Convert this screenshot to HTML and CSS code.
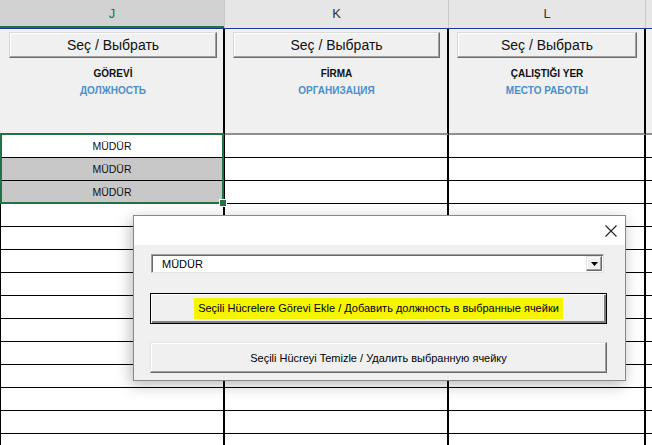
FILE: index.html
```html
<!DOCTYPE html>
<html>
<head>
<meta charset="utf-8">
<link rel="stylesheet" href="styles.css">
</head>
<body>
<div class="sheet">
  <div class="colheads">
    <div class="ch sel">J</div>
    <div class="ch">K</div>
    <div class="ch">L</div>
    <div class="ch last"></div>
  </div>
  <div class="row head">
    <div class="cell first">
      <button class="pick">Seç / Выбрать</button>
      <div class="tr">GÖREVİ</div>
      <div class="ru">ДОЛЖНОСТЬ</div>
    </div>
    <div class="cell">
      <button class="pick">Seç / Выбрать</button>
      <div class="tr">FİRMA</div>
      <div class="ru">ОРГАНИЗАЦИЯ</div>
    </div>
    <div class="cell">
      <button class="pick">Seç / Выбрать</button>
      <div class="tr">ÇALIŞTIĞI YER</div>
      <div class="ru">МЕСТО РАБОТЫ</div>
    </div>
    <div class="cell last"></div>
  </div>
  <div class="body">
    <div class="row"><div class="cell first">MÜDÜR</div><div class="cell"></div><div class="cell"></div><div class="cell last"></div></div>
    <div class="row"><div class="cell first gray">MÜDÜR</div><div class="cell"></div><div class="cell"></div><div class="cell last"></div></div>
    <div class="row"><div class="cell first gray">MÜDÜR</div><div class="cell"></div><div class="cell"></div><div class="cell last"></div></div>
    <div class="row"><div class="cell first"></div><div class="cell"></div><div class="cell"></div><div class="cell last"></div></div>
    <div class="row"><div class="cell first"></div><div class="cell"></div><div class="cell"></div><div class="cell last"></div></div>
    <div class="row"><div class="cell first"></div><div class="cell"></div><div class="cell"></div><div class="cell last"></div></div>
    <div class="row"><div class="cell first"></div><div class="cell"></div><div class="cell"></div><div class="cell last"></div></div>
    <div class="row"><div class="cell first"></div><div class="cell"></div><div class="cell"></div><div class="cell last"></div></div>
    <div class="row"><div class="cell first"></div><div class="cell"></div><div class="cell"></div><div class="cell last"></div></div>
    <div class="row"><div class="cell first"></div><div class="cell"></div><div class="cell"></div><div class="cell last"></div></div>
    <div class="row"><div class="cell first"></div><div class="cell"></div><div class="cell"></div><div class="cell last"></div></div>
    <div class="row"><div class="cell first"></div><div class="cell"></div><div class="cell"></div><div class="cell last"></div></div>
    <div class="row"><div class="cell first"></div><div class="cell"></div><div class="cell"></div><div class="cell last"></div></div>
    <div class="row"><div class="cell first"></div><div class="cell"></div><div class="cell"></div><div class="cell last"></div></div>
    <div class="selection"><span class="handle"></span></div>
  </div>

  <div class="dialog">
    <div class="titlebar">
      <svg class="close" width="12" height="12" viewBox="0 0 12 12"><path d="M0.5 0.5 L11.5 11.5 M11.5 0.5 L0.5 11.5" stroke="#222" stroke-width="1.1" fill="none"/></svg>
    </div>
    <div class="dbody">
      <div class="combo">
        <span class="combotext">MÜDÜR</span>
        <span class="drop"><svg width="7" height="4" viewBox="0 0 7 4"><path d="M0 0 H7 L3.5 4 Z" fill="#000"/></svg></span>
      </div>
      <button class="dbtn default"><span class="hl">Seçili Hücrelere Görevi Ekle / Добавить должность в выбранные ячейки</span></button>
      <button class="dbtn">Seçili Hücreyi Temizle / Удалить выбранную ячейку</button>
    </div>
  </div>
</div>
</body>
</html>
```

FILE: styles.css
```css
html, body {
  margin: 0;
  padding: 0;
  background: #fff;
  overflow: hidden;
}
.sheet {
  position: relative;
  width: 652px;
  height: 445px;
  overflow: hidden;
  font-family: "Liberation Sans", Arial, sans-serif;
}
.colheads {
  display: grid;
  grid-template-columns: 225px 224px 197px 1fr;
  height: 29px;
  box-sizing: border-box;
  border-bottom: 1px solid #1f3a8c;
  background: #e6e6e6;
}
.ch {
  box-sizing: border-box;
  border-right: 1px solid #c8c8c8;
  display: flex;
  align-items: center;
  justify-content: center;
  font-size: 13px;
  color: #333;
  padding-bottom: 1px;
}
.ch.sel {
  background: #d2d2d2;
  color: #217346;
  box-shadow: inset 0 -2px 0 #217346;
}
.ch.last { border-right: none; }

.row {
  display: grid;
  grid-template-columns: 225px 224px 197px 1fr;
  height: 23px;
}
.cell {
  box-sizing: border-box;
  border-right: 2px solid #000;
  border-bottom: 1px solid #000;
  display: flex;
  align-items: center;
  justify-content: center;
  font-size: 10.5px;
  color: #111;
}
.cell.first { border-left: 1px solid #000; }
.cell.last { border-right: none; }
.cell.gray { background: #c8c8c8; }

.row.head {
  height: 106px;
}
.row.head .cell {
  background: #f0f0f0;
  border-bottom: 2px solid #8f8f8f;
  flex-direction: column;
  justify-content: flex-start;
  padding: 3px 7px 0 8px;
}
.row.head .cell.first { border-left: none; padding-left: 9px; padding-right: 6px; }
.row.head .cell.last { padding: 0; }

.pick {
  width: 100%;
  height: 26px;
  margin: 0;
  padding: 0 0 1px;
  box-sizing: border-box;
  background: #f0f0f0;
  border: 1px solid;
  border-color: #d9d9d9 #6e6e6e #6e6e6e #d9d9d9;
  box-shadow: inset -1px -1px 0 #a0a0a0, inset 1px 1px 0 #fff;
  font-family: "Liberation Sans", Arial, sans-serif;
  font-size: 14px;
  color: #111;
}
.tr {
  margin-top: 9px;
  font-weight: bold;
  font-size: 10px;
  line-height: 14px;
  color: #111;
}
.ru {
  margin-top: 3px;
  font-weight: bold;
  font-size: 10px;
  line-height: 14px;
  color: #4a8fcb;
}

.body {
  position: relative;
}
.selection {
  position: absolute;
  left: 0;
  top: -2px;
  width: 224px;
  height: 71px;
  box-sizing: border-box;
  border: 2px solid #217346;
}
.handle {
  position: absolute;
  right: -4px;
  bottom: -4px;
  width: 6px;
  height: 6px;
  background: #217346;
  box-shadow: 0 0 0 1px #fff;
}

.dialog {
  position: absolute;
  left: 133px;
  top: 215px;
  width: 493px;
  height: 166px;
  box-sizing: border-box;
  border: 1px solid #888;
  background: #f0f0f0;
  box-shadow: -2px 4px 14px rgba(0, 0, 0, 0.28);
  display: flex;
  flex-direction: column;
}
.titlebar {
  height: 29px;
  background: #fff;
  display: flex;
  align-items: center;
  justify-content: flex-end;
  padding-right: 8px;
}
.close { display: block; }

.dbody {
  display: flex;
  flex-direction: column;
  padding: 9px 17px 0 16px;
  font-family: "Liberation Sans", Arial, sans-serif;
  font-size: 11px;
  color: #000;
}
.combo {
  margin-left: 1px;
  width: 453px;
  height: 19px;
  box-sizing: border-box;
  background: #fff;
  border: 1px solid;
  border-color: #a0a0a0 #e3e3e3 #e3e3e3 #a0a0a0;
  box-shadow: inset 1px 1px 0 #696969;
  display: flex;
  align-items: center;
  justify-content: space-between;
  padding-left: 10px;
  padding-right: 1px;
}
.combotext { padding-top: 1px; }
.drop {
  width: 16px;
  height: 15px;
  box-sizing: border-box;
  background: #f0f0f0;
  border: 1px solid;
  border-color: #e3e3e3 #696969 #696969 #e3e3e3;
  box-shadow: inset -1px -1px 0 #a0a0a0, inset 1px 1px 0 #fff;
  display: flex;
  align-items: center;
  justify-content: center;
}
.drop svg { display: block; }
.dbtn {
  width: 457px;
  height: 31px;
  margin: 20px 0 0;
  padding: 0;
  box-sizing: border-box;
  background: #f0f0f0;
  border: 1px solid;
  border-color: #e3e3e3 #696969 #696969 #e3e3e3;
  box-shadow: inset -1px -1px 0 #a0a0a0, inset 1px 1px 0 #fff;
  font-family: "Liberation Sans", Arial, sans-serif;
  font-size: 11px;
  color: #000;
  display: flex;
  align-items: center;
  justify-content: center;
}
.dbtn + .dbtn { margin-top: 18px; }
.dbtn.default {
  border-color: #000;
  box-shadow: inset 1px 1px 0 #fff, inset -2px -2px 0 #808080;
}
.hl {
  background: #f5f500;
  padding: 0 4px;
  line-height: 21px;
}
```
